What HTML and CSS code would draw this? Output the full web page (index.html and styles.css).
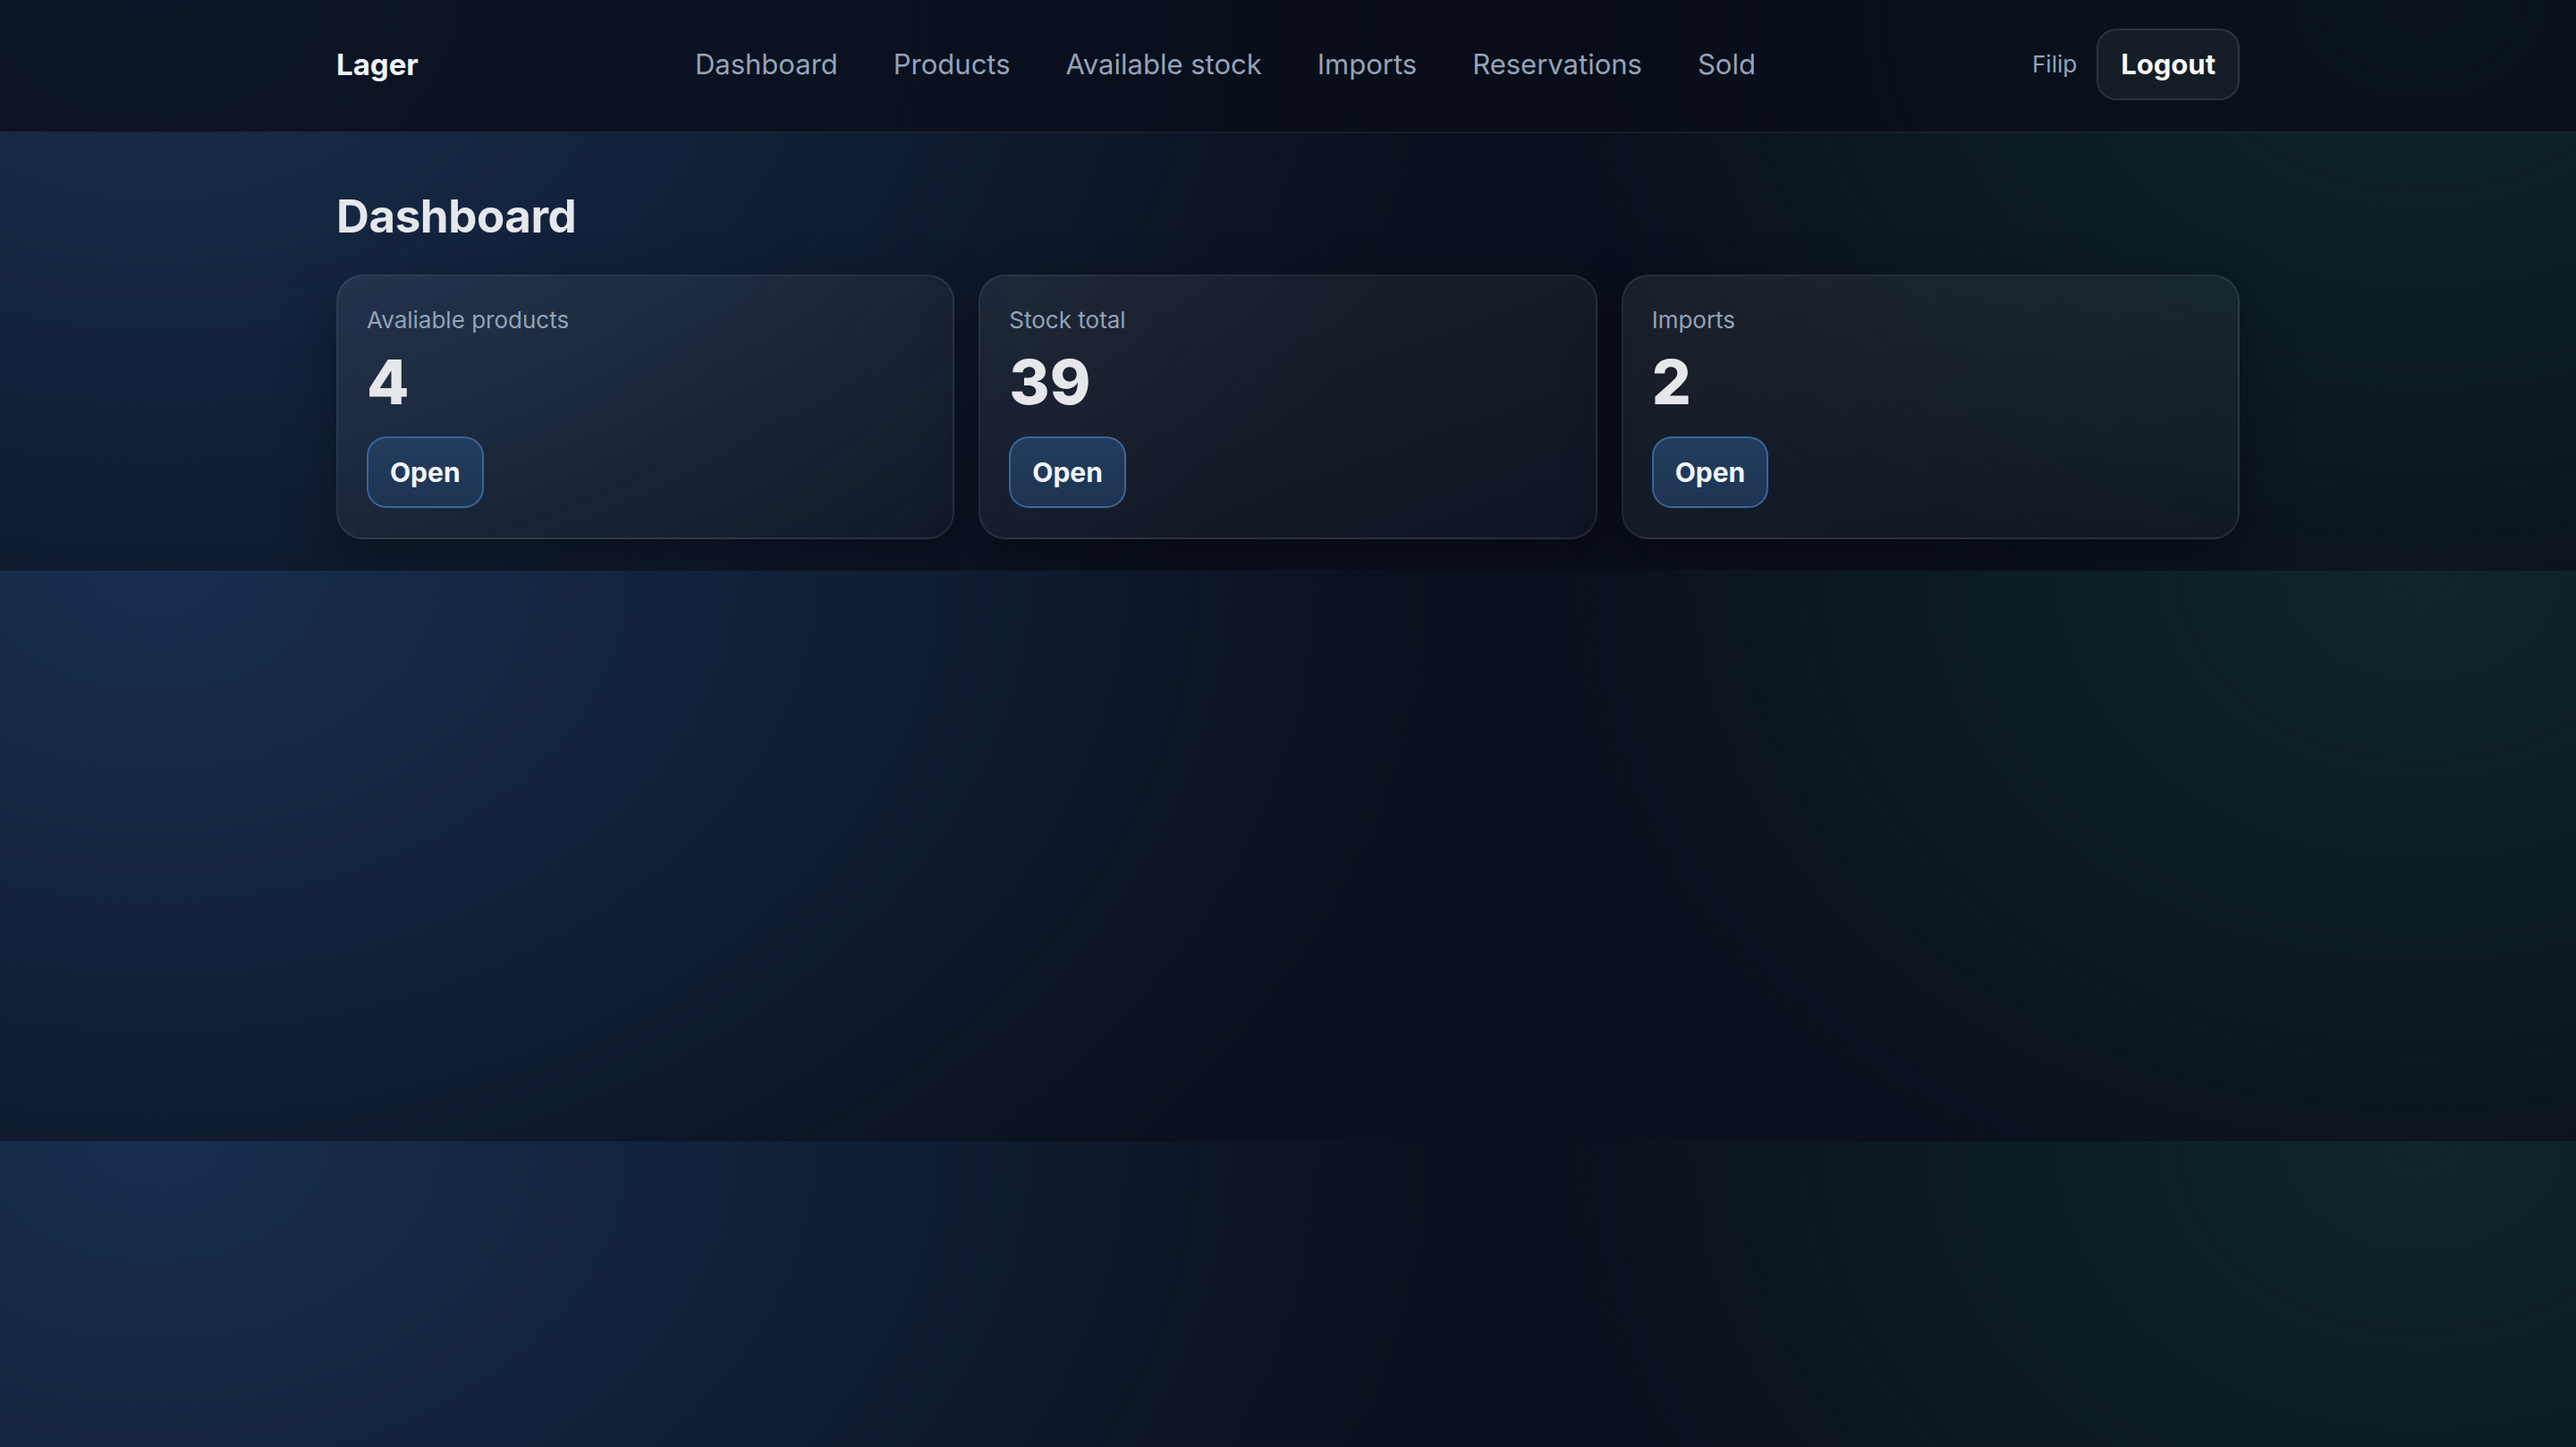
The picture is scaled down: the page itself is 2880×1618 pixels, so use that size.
FILE: index.html
```html
<!DOCTYPE html>
<html lang="en">
<head>
    <meta charset="UTF-8">
    <meta name="viewport" content="width=device-width, initial-scale=1.0">
    <title>Lager - Dashboard</title>
    <link rel="stylesheet" href="styles.css">
</head>
<body>
    <header class="topbar">
        <div class="container topbar-inner">
            <a class="brand" href="#">Lager</a>
            <nav class="nav">
                <a href="#">Dashboard</a>
                <a href="#">Products</a>
                <a href="#">Available stock</a>
                <a href="#">Imports</a>
                <a href="#">Reservations</a>
                <a href="#">Sold</a>
            </nav>
            <div class="user">
                <span class="user-name">Filip</span>
                <button class="btn-logout">Logout</button>
            </div>
        </div>
    </header>

    <main class="container main">
        <h1>Dashboard</h1>
        <div class="cards">
            <div class="card">
                <div class="card-label">Avaliable products</div>
                <div class="card-value">4</div>
                <a class="btn-open" href="#">Open</a>
            </div>
            <div class="card">
                <div class="card-label">Stock total</div>
                <div class="card-value">39</div>
                <a class="btn-open" href="#">Open</a>
            </div>
            <div class="card">
                <div class="card-label">Imports</div>
                <div class="card-value">2</div>
                <a class="btn-open" href="#">Open</a>
            </div>
        </div>
    </main>
</body>
</html>
```

FILE: styles.css
```css
* {
    margin: 0;
    padding: 0;
    box-sizing: border-box;
}

body {
    font-family: Inter, "Noto Sans", Arial, sans-serif;
    color: #e5e7eb;
    background:
        radial-gradient(ellipse 70% 220% at 6% 0%, rgba(28, 54, 92, 0.8), rgba(28, 54, 92, 0) 72%),
        radial-gradient(ellipse 45% 160% at 94% 0%, rgba(16, 46, 48, 0.75), rgba(16, 46, 48, 0) 75%),
        #0a101d;
}

a {
    text-decoration: none;
    color: inherit;
}

.container {
    max-width: 2128px;
    margin: 0 auto;
}

.topbar {
    height: 149px;
    background: rgba(9, 13, 23, 0.72);
    border-bottom: 2px solid rgba(255, 255, 255, 0.07);
}

.topbar-inner {
    height: 100%;
    padding-bottom: 4px;
    display: flex;
    align-items: center;
    justify-content: space-between;
}

.brand {
    font-size: 33px;
    font-weight: 700;
    color: #f1f5f9;
}

.nav {
    display: flex;
    gap: 62px;
}

.nav a {
    font-size: 31px;
    color: #94a3b8;
}

.user {
    display: flex;
    align-items: center;
    gap: 22px;
}

.user-name {
    font-size: 26px;
    color: #94a3b8;
}

.btn-logout {
    height: 80px;
    padding: 0 25px;
    font-family: inherit;
    font-size: 31px;
    font-weight: 700;
    color: #f8fafc;
    background: rgba(255, 255, 255, 0.05);
    border: 2px solid rgba(255, 255, 255, 0.1);
    border-radius: 22px;
    cursor: pointer;
}

.main {
    padding: 62px 0 35px;
}

h1 {
    font-size: 51px;
    line-height: 1.2;
    font-weight: 700;
    letter-spacing: -0.4px;
    color: #e5e7eb;
    margin-bottom: 35px;
}

.cards {
    display: grid;
    grid-template-columns: repeat(3, 1fr);
    gap: 27px;
}

.card {
    padding: 33px 32px;
    border: 2px solid rgba(255, 255, 255, 0.08);
    border-radius: 30px;
    background: linear-gradient(160deg, rgba(255, 255, 255, 0.07), rgba(255, 255, 255, 0.025));
    box-shadow: 0 20px 60px rgba(0, 0, 0, 0.35);
}

.card-label {
    font-size: 26px;
    line-height: 1.2;
    color: #94a3b8;
}

.card-value {
    font-size: 69px;
    line-height: 1.1;
    font-weight: 800;
    color: #e5e7eb;
    margin-top: 17px;
}

.btn-open {
    display: inline-flex;
    align-items: center;
    height: 80px;
    margin-top: 22px;
    padding: 0 24px;
    font-size: 30px;
    font-weight: 700;
    color: #f1f5f9;
    background: linear-gradient(180deg, #233d5f, #1e3452);
    border: 2px solid rgba(80, 140, 210, 0.55);
    border-radius: 22px;
}
```
